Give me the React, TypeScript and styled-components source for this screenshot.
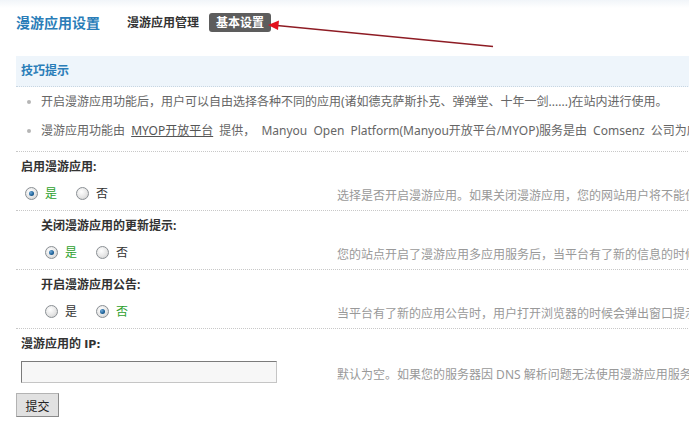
import React from 'react'
import styled, { createGlobalStyle } from 'styled-components'

const GlobalStyle = createGlobalStyle`
  html, body {
    margin: 0;
    padding: 0;
    background: #fff;
    overflow: hidden;
  }
  body {
    font-family: "Noto Sans", "Noto Sans CJK SC", sans-serif;
    font-size: 12px;
    color: #333;
  }
`

interface Setting {
  label: string
  indent: boolean
  value: boolean
  tip: string
}

const settings: Setting[] = [
  {
    label: '启用漫游应用:',
    indent: false,
    value: true,
    tip: '选择是否开启漫游应用。如果关闭漫游应用，您的网站用户将不能使用任何基于漫游平台的应用',
  },
  {
    label: '关闭漫游应用的更新提示:',
    indent: true,
    value: true,
    tip: '您的站点开启了漫游应用多应用服务后，当平台有了新的信息的时候，会在后台给予提示',
  },
  {
    label: '开启漫游应用公告:',
    indent: true,
    value: false,
    tip: '当平台有了新的应用公告时，用户打开浏览器的时候会弹出窗口提示',
  },
]

function App() {
  return (
    <Page>
      <GlobalStyle />
      <Header>
        <PageTitle>漫游应用设置</PageTitle>
        <NavLink>漫游应用管理</NavLink>
        <NavPill>基本设置</NavPill>
      </Header>

      <TipsBox>
        <TipsTitle>技巧提示</TipsTitle>
        <TipsList>
          <TipItem>
            开启漫游应用功能后，用户可以自由选择各种不同的应用(诸如德克萨斯扑克、弹弹堂、十年一剑......)在站内进行使用。
          </TipItem>
          <TipItem $spaced>
            漫游应用功能由 <TipLink>MYOP开放平台</TipLink> 提供， Manyou Open
            Platform(Manyou开放平台/MYOP)服务是由 Comsenz
            公司为应用开发者和站长提供的开放平台服务
          </TipItem>
        </TipsList>
      </TipsBox>

      {settings.map(s => (
        <Block key={s.label}>
          <Label $indent={s.indent}>{s.label}</Label>
          <ControlRow>
            <Choices $indent={s.indent}>
              <Choice>
                <Radio $checked={s.value} />
                <ChoiceText $on={s.value}>是</ChoiceText>
              </Choice>
              <Choice>
                <Radio $checked={!s.value} />
                <ChoiceText $on={!s.value}>否</ChoiceText>
              </Choice>
            </Choices>
            <Hint>{s.tip}</Hint>
          </ControlRow>
        </Block>
      ))}

      <div>
        <IpLabel>
          漫游应用的 <Latin>IP:</Latin>
        </IpLabel>
        <ControlRow>
          <TextInput type="text" />
          <Hint>
            默认为空。如果您的服务器因 DNS 解析问题无法使用漫游应用服务，请输入漫游应用的 IP 地址
          </Hint>
        </ControlRow>
      </div>

      <SubmitButton>提交</SubmitButton>

      <Arrow width="689" height="60" viewBox="0 0 689 60">
        <line x1="277" y1="25.5" x2="493" y2="46.5" stroke="#8e1c24" strokeWidth="1.3" />
        <polygon points="268,25 279,20.5 278,30" fill="#e3121d" />
      </Arrow>
    </Page>
  )
}

export default App

const Page = styled.div`
  position: relative;
  width: 1200px;
  padding: 0 0 20px 16px;
  box-sizing: border-box;
`

const Header = styled.div`
  display: flex;
  align-items: center;
  height: 44px;
  margin-left: -16px;
  padding-left: 16px;
  background: linear-gradient(#f1f5f9, #fff 8px);
`

const PageTitle = styled.h1`
  margin: 0 27px 0 0;
  font-size: 14px;
  font-weight: bold;
  color: #2a7db8;
`

const NavLink = styled.span`
  font-weight: bold;
  color: #333;
  margin-right: 10px;
`

const NavPill = styled.span`
  display: inline-block;
  height: 19px;
  line-height: 19px;
  padding: 0 7px;
  border-radius: 3px;
  background: #5d5d5d;
  color: #fff;
  font-weight: bold;
`

const TipsBox = styled.div`
  margin-top: 12px;
  border-bottom: 1px dotted #c8c8c8;
  padding-bottom: 6px;
`

const TipsTitle = styled.div`
  height: 30px;
  line-height: 30px;
  padding-left: 5px;
  background: #eef5fb;
  border-bottom: 1px dotted #c8d6e2;
  color: #2a7db8;
  font-weight: bold;
`

const TipsList = styled.ul`
  list-style: none;
  margin: 0;
  padding: 0;
`

const TipItem = styled.li<{ $spaced?: boolean }>`
  position: relative;
  height: 29px;
  line-height: 29px;
  padding-left: 25px;
  color: #666;
  white-space: nowrap;
  word-spacing: ${p => (p.$spaced ? 3 : 0)}px;

  &::before {
    content: '';
    position: absolute;
    left: 11px;
    top: 13px;
    width: 4px;
    height: 4px;
    border-radius: 50%;
    background: #b5b5b5;
  }
`

const TipLink = styled.a`
  color: #555;
  text-decoration: underline;
`

const Block = styled.div`
  border-bottom: 1px dotted #c8c8c8;
  padding-bottom: 6px;
`

const Label = styled.div<{ $indent: boolean }>`
  height: 30px;
  line-height: 30px;
  padding-left: ${p => (p.$indent ? 25 : 5)}px;
  font-weight: bold;
  color: #333;
`

const ControlRow = styled.div`
  display: grid;
  grid-template-columns: 316px 1fr;
  align-items: center;
  min-height: 22px;
  padding-left: 5px;
`

const Choices = styled.div<{ $indent: boolean }>`
  display: flex;
  align-items: center;
  padding-left: ${p => (p.$indent ? 20 : 0)}px;
`

const Choice = styled.label`
  display: flex;
  align-items: center;
  margin-right: 15px;
  margin-left: 4px;
`

const Radio = styled.span<{ $checked: boolean }>`
  position: relative;
  display: inline-block;
  width: 11px;
  height: 11px;
  border-radius: 50%;
  border: 1px solid #8a8f94;
  background: radial-gradient(circle at 40% 35%, #ffffff 0, #e6e6e6 55%, #c9c9c9 100%);
  margin-right: 7px;

  &::after {
    content: '';
    display: ${p => (p.$checked ? 'block' : 'none')};
    position: absolute;
    left: 3px;
    top: 3px;
    width: 5px;
    height: 5px;
    border-radius: 50%;
    background: radial-gradient(circle at 35% 35%, #6fa9d8 0, #1b5f96 60%, #0d3b66 100%);
  }
`

const ChoiceText = styled.span<{ $on: boolean }>`
  color: ${p => (p.$on ? '#2ea12e' : '#333')};
`

const Hint = styled.div`
  color: #999;
  white-space: nowrap;
  padding-top: 3px;
`

const IpLabel = styled.div`
  height: 30px;
  line-height: 30px;
  padding-left: 5px;
  font-weight: bold;
  color: #333;
  margin-bottom: 2px;
`

const Latin = styled.span`
  font-family: "DejaVu Sans", sans-serif;
  font-size: 11px;
`

const TextInput = styled.input`
  width: 256px;
  height: 22px;
  box-sizing: border-box;
  background: #f7f7f7;
  border: 1px solid #c5c5c5;
  border-top-color: #7b7b7b;
  border-left-color: #7b7b7b;
  padding: 0 4px;
  outline: none;
`

const SubmitButton = styled.button`
  display: block;
  margin-top: 10px;
  width: 43px;
  height: 24px;
  padding: 0;
  background: #e1e1e1;
  border: 1px solid #b3b3b3;
  border-right-color: #8a8a8a;
  border-bottom-color: #8a8a8a;
  font-family: "Noto Sans CJK SC", sans-serif;
  font-size: 12px;
  color: #222;
`

const Arrow = styled.svg`
  position: absolute;
  left: 0;
  top: 0;
  pointer-events: none;
`
